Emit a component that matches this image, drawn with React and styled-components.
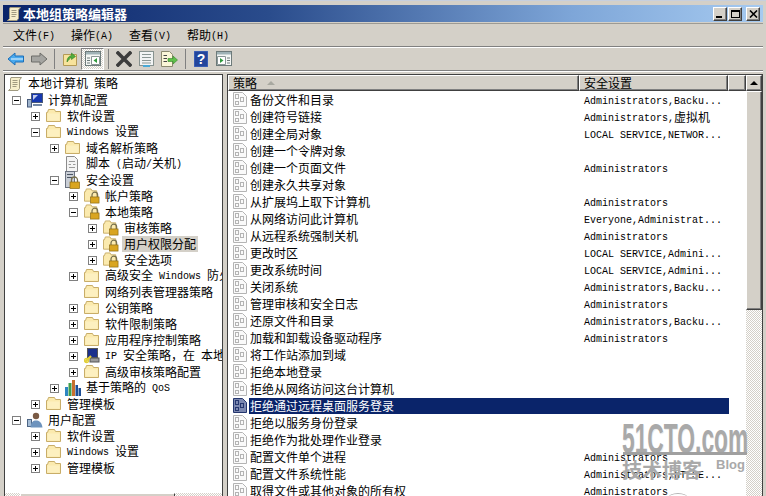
import styled, { createGlobalStyle, css } from "styled-components";

const GlobalStyle = createGlobalStyle`
  html, body {
    margin: 0;
    padding: 0;
    background: #d4d0c8;
  }
`;

const dither = css`
  background: repeating-conic-gradient(#d4d0c8 0 25%, #fff 0 50%) 0 0 / 2px 2px;
`;

const raised = css`
  background-color: #d4d0c8;
  border: 1px solid;
  border-color: #fff #404040 #404040 #fff;
  box-shadow: inset -1px -1px 0 #808080;
  box-sizing: border-box;
`;

const treeItems = [
  { level: -1, icon: "scroll", label: "本地计算机 策略" },
  { level: 0, exp: "-", icon: "pc", label: "计算机配置" },
  { level: 1, exp: "+", icon: "folder", label: "软件设置" },
  { level: 1, exp: "-", icon: "folder", label: "Windows 设置" },
  { level: 2, exp: "+", icon: "folder", label: "域名解析策略" },
  { level: 2, icon: "script", label: "脚本 (启动/关机)" },
  { level: 2, exp: "-", icon: "server", label: "安全设置" },
  { level: 3, exp: "+", icon: "lock", label: "帐户策略" },
  { level: 3, exp: "-", icon: "lock", label: "本地策略" },
  { level: 4, exp: "+", icon: "lock", label: "审核策略" },
  { level: 4, exp: "+", icon: "lock", label: "用户权限分配", current: true },
  { level: 4, exp: "+", icon: "lock", label: "安全选项" },
  { level: 3, exp: "+", icon: "folder", label: "高级安全 Windows 防火墙" },
  { level: 3, icon: "folder", label: "网络列表管理器策略" },
  { level: 3, exp: "+", icon: "folder", label: "公钥策略" },
  { level: 3, exp: "+", icon: "folder", label: "软件限制策略" },
  { level: 3, exp: "+", icon: "folder", label: "应用程序控制策略" },
  { level: 3, exp: "+", icon: "ip", label: "IP 安全策略，在 本地计算机" },
  { level: 3, exp: "+", icon: "folder", label: "高级审核策略配置" },
  { level: 2, exp: "+", icon: "qos", label: "基于策略的 QoS" },
  { level: 1, exp: "+", icon: "folder", label: "管理模板" },
  { level: 0, exp: "-", icon: "user", label: "用户配置" },
  { level: 1, exp: "+", icon: "folder", label: "软件设置" },
  { level: 1, exp: "+", icon: "folder", label: "Windows 设置" },
  { level: 1, exp: "+", icon: "folder", label: "管理模板" },
];

const policies = [
  ["备份文件和目录", "Administrators,Backu..."],
  ["创建符号链接", "Administrators,虚拟机"],
  ["创建全局对象", "LOCAL SERVICE,NETWOR..."],
  ["创建一个令牌对象", ""],
  ["创建一个页面文件", "Administrators"],
  ["创建永久共享对象", ""],
  ["从扩展坞上取下计算机", "Administrators"],
  ["从网络访问此计算机", "Everyone,Administrat..."],
  ["从远程系统强制关机", "Administrators"],
  ["更改时区", "LOCAL SERVICE,Admini..."],
  ["更改系统时间", "LOCAL SERVICE,Admini..."],
  ["关闭系统", "Administrators,Backu..."],
  ["管理审核和安全日志", "Administrators"],
  ["还原文件和目录", "Administrators,Backu..."],
  ["加载和卸载设备驱动程序", "Administrators"],
  ["将工作站添加到域", ""],
  ["拒绝本地登录", ""],
  ["拒绝从网络访问这台计算机", ""],
  ["拒绝通过远程桌面服务登录", ""],
  ["拒绝以服务身份登录", ""],
  ["拒绝作为批处理作业登录", ""],
  ["配置文件单个进程", "Administrators"],
  ["配置文件系统性能", "Administrators,NT SE..."],
  ["取得文件或其他对象的所有权", "Administrators"],
];

const SELECTED_ROW = 18;

// latin runs are narrower than the cjk ones, like the old bitmap font
const Mixed = ({ text }) =>
  text.split(/([\x00-\x7f]+)/).map((part, i) =>
    /^[\x00-\x7f]/.test(part) ? <Latin key={i}>{part}</Latin> : part
  );

const FolderIcon = () => (
  <svg width="16" height="14" viewBox="0 0 16 14">
    <path d="M0.5 3.5V12.5H14.5V2.5H9.5L8.5 0.5H2.5L1.5 3.5Z" fill="#fbeaae" stroke="#c8ad68" />
    <path d="M1.5 4.5H13.5V11.5H1.5Z" fill="#fdf0c0" />
  </svg>
);

const LockIcon = () => (
  <svg width="17" height="16" viewBox="0 0 17 16">
    <path d="M0.5 3.5V13.5H13.5V2.5H8.5L7.5 0.5H2.5L1.5 3.5Z" fill="#fbeaae" stroke="#c8ad68" />
    <path d="M8.5 9V7a3 3 0 0 1 6 0v2" fill="none" stroke="#77704c" strokeWidth="1.3" />
    <rect x="7" y="9" width="9" height="6.5" fill="#d9a520" stroke="#8a6a12" strokeWidth="0.7" />
  </svg>
);

const ScrollIcon = () => (
  <svg width="16" height="16" viewBox="0 0 16 16">
    <path d="M4 1.5H14.5L12.5 4V12.5L11 14.5H1.5L3.5 12.5V3Z" fill="#f6eecb" stroke="#a09a80" />
    <path d="M5.5 4.5H10.5M5.5 6.5H10.5M5.5 8.5H10.5M5.5 10.5H9.5" stroke="#a09a80" />
  </svg>
);

const PcIcon = () => (
  <svg width="16" height="16" viewBox="0 0 16 16">
    <rect x="0.5" y="7.5" width="4" height="7.5" fill="#9fb4cc" stroke="#45597a" />
    <rect x="4.5" y="1.5" width="11" height="9" fill="#1638b0" stroke="#4a5a78" />
    <path d="M6 3H11L6 8Z" fill="#fff" opacity="0.75" />
    <path d="M6 12H15V14H6Z" fill="#7388a6" />
  </svg>
);

const ScriptIcon = () => (
  <svg width="14" height="16" viewBox="0 0 14 16">
    <path d="M1.5 0.5H9.5L12.5 3.5V15.5H1.5Z" fill="#f4f4f4" stroke="#8c8c8c" />
    <path d="M4 5.5H10M3.5 8.5H6M8 8.5H10.5M4 11.5H10" stroke="#9a9a9a" />
  </svg>
);

const ServerIcon = () => (
  <svg width="15" height="18" viewBox="0 0 15 18">
    <rect x="0.5" y="0.5" width="9" height="16" fill="#c9ced6" stroke="#6b7280" />
    <path d="M2 3.5H8M2 6.5H8" stroke="#4b5563" />
    <path d="M6.5 11V9a3 3 0 0 1 6 0v2" fill="none" stroke="#77704c" strokeWidth="1.3" />
    <rect x="5" y="11" width="9.5" height="6.5" fill="#d9a520" stroke="#8a6a12" strokeWidth="0.7" />
  </svg>
);

const IpIcon = () => (
  <svg width="16" height="16" viewBox="0 0 16 16">
    <rect x="3.5" y="0.5" width="10" height="9" fill="#1a2f8c" stroke="#555" />
    <rect x="6" y="10" width="9" height="4" fill="#9a9a9a" stroke="#555" />
    <path d="M1 14L7 8" stroke="#e2cf38" strokeWidth="2.2" />
    <circle cx="2.5" cy="12.5" r="2" fill="none" stroke="#e2cf38" strokeWidth="1.3" />
  </svg>
);

const QosIcon = () => (
  <svg width="16" height="16" viewBox="0 0 16 16">
    <rect x="0" y="7" width="3" height="9" fill="#2d86c2" />
    <rect x="3.5" y="3" width="3" height="13" fill="#3f9e4c" />
    <rect x="7" y="0" width="3" height="16" fill="#c8702e" />
    <rect x="10.5" y="5" width="2.5" height="11" fill="#1d4f96" />
    <rect x="13.5" y="8" width="2.5" height="8" fill="#1d4f96" />
  </svg>
);

const UserIcon = () => (
  <svg width="16" height="16" viewBox="0 0 16 16">
    <rect x="0.5" y="7.5" width="4" height="7" fill="#a5bdd6" stroke="#4d6585" />
    <circle cx="9" cy="4" r="3.2" fill="#7a5a44" />
    <path d="M3.5 15.5C4 10 6 8.5 9 8.5S14.5 10 15.5 15.5Z" fill="#6d93bd" />
  </svg>
);

const treeIcons = {
  folder: FolderIcon,
  lock: LockIcon,
  scroll: ScrollIcon,
  pc: PcIcon,
  script: ScriptIcon,
  server: ServerIcon,
  ip: IpIcon,
  qos: QosIcon,
  user: UserIcon,
};

const PolicyIcon = ({ selected }) => {
  const line = selected ? "#24366e" : "#b4b4b4";
  return (
    <svg width="14" height="15" viewBox="0 0 14 15">
      <path d="M0.5 0.5H9.5L13.5 4.5V14.5H0.5Z" fill={selected ? "#7c88b0" : "#fafafa"} stroke={line} />
      <rect x="2.5" y="2.5" width="3" height="4" fill="none" stroke={line} />
      <rect x="7.5" y="5.5" width="3" height="4" fill="none" stroke={line} />
      <rect x="2.5" y="9.5" width="3" height="3" fill="none" stroke={line} />
    </svg>
  );
};

const BackIcon = () => (
  <svg width="18" height="14" viewBox="0 0 18 14">
    <path d="M1 7L8 1V4H16.5V10H8V13Z" fill="#49a9ee" stroke="#1c6fb8" />
    <path d="M4 7H16" stroke="#bfe3fb" strokeWidth="1.4" />
  </svg>
);

const ForwardIcon = () => (
  <svg width="18" height="14" viewBox="0 0 18 14">
    <path d="M17 7L10 1V4H1.5V10H10V13Z" fill="#a5a5a1" stroke="#6c6c68" />
  </svg>
);

const UpIcon = () => (
  <svg width="16" height="17" viewBox="0 0 16 17">
    <path d="M1.5 4.5H14.5V15.5H1.5Z" fill="#f7e39c" stroke="#b49a55" />
    <path d="M5 12C5 8 7 6 9.5 5.5V3L13.5 6.5L9.5 9.5V7.5C8 8 7 9.5 5 12Z" fill="#4fae3b" stroke="#2f7d25" strokeWidth="0.6" />
  </svg>
);

const PanelIcon = ({ flip }) => (
  <svg width="16" height="15" viewBox="0 0 16 15">
    <rect x="0.5" y="0.5" width="15" height="14" fill="#f4f6f4" stroke="#6d7a7a" />
    <rect x="1" y="1" width="14" height="2.5" fill="#9fb2b6" />
    <path d={flip ? "M1.5 5.5H9.5V13.5H1.5Z" : "M6.5 5.5H14.5V13.5H6.5Z"} fill="#fff" stroke="#8a9696" />
    <path d={flip ? "M4 7L7.5 9.5L4 12Z" : "M12 7L8.5 9.5L12 12Z"} fill="#2f9a3d" />
    <path d={flip ? "M11 7H14M11 9.5H14M11 12H14" : "M2 7H5M2 9.5H5M2 12H5"} stroke="#6d7a7a" />
  </svg>
);

const DeleteIcon = () => (
  <svg width="16" height="16" viewBox="0 0 16 16">
    <path d="M2 2L14 14M14 2L2 14" stroke="#3c3c3c" strokeWidth="3.6" strokeLinecap="square" />
  </svg>
);

const PropsIcon = () => (
  <svg width="15" height="16" viewBox="0 0 15 16">
    <rect x="0.5" y="0.5" width="14" height="14" fill="#f2f4f4" stroke="#87928f" />
    <path d="M3 3.5H12M3 6.5H12M3 9.5H12M3 12H12" stroke="#8a9694" />
    <rect x="4" y="14" width="7" height="2" fill="#49a9d6" />
  </svg>
);

const ExportIcon = () => (
  <svg width="17" height="16" viewBox="0 0 17 16">
    <path d="M0.5 0.5H8.5L11.5 3.5V15.5H0.5Z" fill="#fbf6d8" stroke="#8c8a70" />
    <path d="M2.5 4.5H6M2.5 7.5H6M2.5 10.5H6" stroke="#444" />
    <path d="M7 7.5H12V5L16.5 9L12 13V10.5H7Z" fill="#5fc04a" stroke="#37862a" strokeWidth="0.6" />
  </svg>
);

const HelpIcon = () => (
  <svg width="14" height="16" viewBox="0 0 14 16">
    <rect x="0" y="0" width="14" height="16" fill="#23459c" />
    <rect x="0" y="0" width="14" height="16" fill="none" stroke="#4f72c8" />
    <text x="7" y="13" textAnchor="middle" fontFamily="Liberation Sans" fontWeight="700" fontSize="14" fill="#fff">?</text>
  </svg>
);

const CloseGlyph = () => (
  <svg width="9" height="8" viewBox="0 0 9 8">
    <path d="M1 0.5L8 7.5M8 0.5L1 7.5" stroke="#000" strokeWidth="1.6" />
  </svg>
);

const App = () => {
  return (
    <>
      <GlobalStyle />
      <Window>
        <TitleBar>
          <TitleIcon><ScrollIcon /></TitleIcon>
          <TitleText>本地组策略编辑器</TitleText>
          <WinButton><MinGlyph /></WinButton>
          <WinButton><MaxGlyph /></WinButton>
          <WinButton $close><CloseGlyph /></WinButton>
        </TitleBar>

        <MenuBar>
          <MenuItem><Mixed text="文件(F)" /></MenuItem>
          <MenuItem><Mixed text="操作(A)" /></MenuItem>
          <MenuItem><Mixed text="查看(V)" /></MenuItem>
          <MenuItem><Mixed text="帮助(H)" /></MenuItem>
        </MenuBar>

        <ToolBar>
          <ToolButton><BackIcon /></ToolButton>
          <ToolButton><ForwardIcon /></ToolButton>
          <ToolSep />
          <ToolButton><UpIcon /></ToolButton>
          <ToolButton $pressed><PanelIcon /></ToolButton>
          <ToolSep />
          <ToolButton><DeleteIcon /></ToolButton>
          <ToolButton><PropsIcon /></ToolButton>
          <ToolButton><ExportIcon /></ToolButton>
          <ToolSep />
          <ToolButton><HelpIcon /></ToolButton>
          <ToolButton><PanelIcon flip /></ToolButton>
        </ToolBar>

        <Panes>
          <TreePane>
            {treeItems.map((item, i) => {
              const Icon = treeIcons[item.icon];
              return (
                <TreeRow key={i} $level={item.level}>
                  {item.level >= 0 && (
                    <Expander $empty={!item.exp}>{item.exp && <ExpMark $plus={item.exp === "+"} />}</Expander>
                  )}
                  <TreeIcon><Icon /></TreeIcon>
                  <TreeLabel $current={item.current}><Mixed text={item.label} /></TreeLabel>
                </TreeRow>
              );
            })}
            <TreeScroll>
              <TreeThumb />
            </TreeScroll>
          </TreePane>

          <ListPane>
            <ListMain>
              <Header>
                <HeaderCell $width={351}>
                  策略
                  <SortArrow />
                </HeaderCell>
                <HeaderCell $width={149}>安全设置</HeaderCell>
                <HeaderCell $fill />
              </Header>
              {policies.map(([name, value], i) => (
                <PolicyRow key={i}>
                  <PolicyGlyph><PolicyIcon selected={i === SELECTED_ROW} /></PolicyGlyph>
                  <PolicyBody $selected={i === SELECTED_ROW}>
                    <PolicyName>{name}</PolicyName>
                    <PolicyValue><Mixed text={value} /></PolicyValue>
                  </PolicyBody>
                </PolicyRow>
              ))}
            </ListMain>
            <ScrollBar>
              <ScrollButton><ArrowUp /></ScrollButton>
              <ScrollThumb />
            </ScrollBar>
          </ListPane>
        </Panes>

        <Watermark>
          <WatermarkLogo>51CTO.com</WatermarkLogo>
          <WatermarkLine />
          <WatermarkCn>技术博客</WatermarkCn>
          <WatermarkBlog>Blog</WatermarkBlog>
          <WatermarkArc />
        </Watermark>
      </Window>
    </>
  );
};

export default App;

const Window = styled.div`
  position: relative;
  width: 766px;
  height: 496px;
  overflow: hidden;
  box-sizing: border-box;
  padding: 4px 3px 0 3px;
  display: flex;
  flex-direction: column;
  background: #d4d0c8;
  border-top: 1px solid #c6cfde;
  font-family: "Noto Sans CJK SC", "Liberation Sans", sans-serif;
  font-size: 12px;
  color: #000;
`;

const Latin = styled.span`
  font-family: "Liberation Mono", monospace;
  font-size: 10px;
  vertical-align: 1px;
`;

const TitleBar = styled.div`
  height: 17px;
  flex: none;
  display: flex;
  align-items: center;
  padding: 0 3px 0 3px;
  background: linear-gradient(90deg, #0a246a 0%, #2a4c8c 35%, #7ea6d8 75%, #a6caf0 100%);
`;

const TitleIcon = styled.span`
  display: flex;
  width: 17px;
`;

const TitleText = styled.span`
  flex: 1;
  color: #fff;
  font-weight: 700;
  font-size: 13px;
  line-height: 17px;
`;

const WinButton = styled.button`
  ${raised}
  width: 14px;
  height: 14px;
  padding: 0;
  margin-left: ${(p) => (p.$close ? "4px" : "1px")};
  display: flex;
  align-items: center;
  justify-content: center;
`;

const MinGlyph = styled.span`
  width: 6px;
  height: 2px;
  background: #000;
  margin-top: 6px;
  margin-right: 2px;
`;

const MaxGlyph = styled.span`
  width: 9px;
  height: 8px;
  box-sizing: border-box;
  border: 1px solid #000;
  border-top-width: 2px;
`;

const MenuBar = styled.div`
  height: 24px;
  flex: none;
  display: flex;
  align-items: center;
  padding: 0 0 1px 10px;
  margin-top: 1px;
  border-top: 1px solid #9c9a94;
  border-bottom: 1px solid #808080;
  box-sizing: border-box;
  box-shadow: 0 1px 0 #fff;
`;

const MenuItem = styled.span`
  width: 58px;
  white-space: pre;
`;

const ToolBar = styled.div`
  height: 24px;
  flex: none;
  display: flex;
  align-items: center;
  padding-left: 1px;
  box-sizing: border-box;
  border-bottom: 1px solid #808080;
  box-shadow: 0 1px 0 #fff;
`;

const ToolButton = styled.span`
  width: 23px;
  height: 22px;
  display: flex;
  align-items: center;
  justify-content: center;
  box-sizing: border-box;
  ${(p) =>
    p.$pressed &&
    css`
      ${dither}
      border: 1px solid;
      border-color: #808080 #fff #fff #808080;
    `}
`;

const ToolSep = styled.span`
  width: 1px;
  height: 20px;
  margin: 0 3px 0 4px;
  background: #808080;
`;

const Panes = styled.div`
  flex: 1;
  display: flex;
  gap: 4px;
  margin-top: 3px;
  min-height: 0;
`;

const TreePane = styled.div`
  width: 219px;
  flex: none;
  position: relative;
  box-sizing: border-box;
  overflow: hidden;
  padding-top: 1px;
  background: #fff;
  border: 1px solid #404040;
  border-bottom: none;
  margin-left: 1px;
`;

const TreeRow = styled.div`
  height: 16px;
  display: flex;
  align-items: center;
  white-space: pre;
  padding-left: ${(p) => (p.$level < 0 ? 2 : 7 + p.$level * 19)}px;
`;

const Expander = styled.span`
  width: 9px;
  height: 9px;
  flex: none;
  margin-right: 6px;
  box-sizing: border-box;
  position: relative;
  border: 1px solid ${(p) => (p.$empty ? "transparent" : "#808080")};
  background: #fff;
`;

const ExpMark = styled.span`
  position: absolute;
  left: 1px;
  top: 3px;
  width: 5px;
  height: 1px;
  background: #000;

  ${(p) =>
    p.$plus &&
    css`
      &::after {
        content: "";
        position: absolute;
        left: 2px;
        top: -2px;
        width: 1px;
        height: 5px;
        background: #000;
      }
    `}
`;

const TreeIcon = styled.span`
  width: 16px;
  height: 16px;
  flex: none;
  margin-right: 3px;
  display: flex;
  align-items: center;
`;

const TreeLabel = styled.span`
  padding: 0 2px;
  line-height: 16px;
  background: ${(p) => (p.$current ? "#d4d0c8" : "transparent")};
`;

const TreeScroll = styled.div`
  position: absolute;
  left: 0;
  right: 0;
  bottom: 0;
  height: 3px;
  ${dither}
`;

const TreeThumb = styled.div`
  ${raised}
  width: 155px;
  height: 3px;
  margin-left: 15px;
  border-bottom: none;
  box-shadow: none;
`;

const ListPane = styled.div`
  flex: 1;
  display: flex;
  min-width: 0;
  background: #fff;
  border: 1px solid #404040;
  border-bottom: none;
`;

const ListMain = styled.div`
  flex: 1;
  min-width: 0;
  overflow: hidden;
`;

const Header = styled.div`
  height: 16px;
  display: flex;
`;

const HeaderCell = styled.div`
  ${raised}
  width: ${(p) => (p.$fill ? "auto" : `${p.$width}px`)};
  flex: ${(p) => (p.$fill ? 1 : "none")};
  line-height: 14px;
  padding-left: 4px;
  display: flex;
  align-items: center;
`;

const SortArrow = styled.span`
  width: 0;
  height: 0;
  margin-left: 10px;
  border-left: 4px solid transparent;
  border-right: 4px solid transparent;
  border-bottom: 4px solid #a8a8a0;
`;

const PolicyRow = styled.div`
  height: 17px;
  display: flex;
  align-items: center;
  padding: 0 17px 0 5px;
  white-space: pre;
`;

const PolicyGlyph = styled.span`
  width: 16px;
  flex: none;
  display: flex;
`;

const PolicyBody = styled.div`
  flex: 1;
  height: 16px;
  display: flex;
  align-items: center;
  background: ${(p) => (p.$selected ? "#0a246a" : "transparent")};
  color: ${(p) => (p.$selected ? "#fff" : "#000")};
`;

const PolicyName = styled.span`
  width: 334px;
  flex: none;
  padding-left: 1px;
  overflow: hidden;
`;

const PolicyValue = styled.span`
  flex: 1;
`;

const ScrollBar = styled.div`
  width: 16px;
  flex: none;
  display: flex;
  flex-direction: column;
  ${dither}
`;

const ScrollButton = styled.div`
  ${raised}
  height: 16px;
  display: flex;
  align-items: center;
  justify-content: center;
`;

const ArrowUp = styled.span`
  width: 0;
  height: 0;
  border-left: 4px solid transparent;
  border-right: 4px solid transparent;
  border-bottom: 4px solid #000;
`;

const ScrollThumb = styled.div`
  ${raised}
  height: 219px;
`;

const Watermark = styled.div`
  position: absolute;
  left: 622px;
  top: 424px;
  width: 130px;
  height: 70px;
  pointer-events: none;
  color: #a9a9a9;
`;

const WatermarkLogo = styled.div`
  position: absolute;
  left: 0;
  top: -11px;
  font-family: "Liberation Sans", sans-serif;
  font-weight: 700;
  font-size: 43px;
  line-height: 48px;
  white-space: nowrap;
  transform: scaleX(0.53);
  transform-origin: left top;
  text-shadow: 1px 1px 0 #ececec;
`;

const WatermarkLine = styled.div`
  position: absolute;
  left: 1px;
  top: 27px;
  width: 124px;
  height: 3px;
  background: #a0a0a0;
`;

const WatermarkCn = styled.div`
  position: absolute;
  left: 0;
  top: 33px;
  font-size: 20px;
  font-weight: 700;
  line-height: 24px;
  white-space: nowrap;
`;

const WatermarkBlog = styled.div`
  position: absolute;
  left: 94px;
  top: 32px;
  font-family: "Liberation Sans", sans-serif;
  font-weight: 700;
  font-size: 13px;
  line-height: 15px;
`;

const WatermarkArc = styled.div`
  position: absolute;
  left: 46px;
  top: 68px;
  width: 20px;
  height: 10px;
  border-top: 1px solid #b5b5b5;
  border-radius: 50%;
`;
